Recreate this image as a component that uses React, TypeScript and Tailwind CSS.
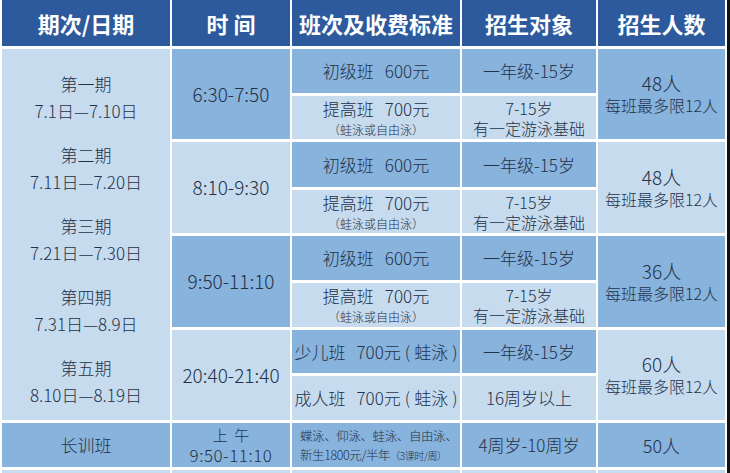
import React from "react";

const MID = "bg-[#88b3dc]";
const LIGHT = "bg-[#c7dbef]";

const periods = [
  ["第一期", "7.1日—7.10日"],
  ["第二期", "7.11日—7.20日"],
  ["第三期", "7.21日—7.30日"],
  ["第四期", "7.31日—8.9日"],
  ["第五期", "8.10日—8.19日"],
];

// row placement classes, written out so Tailwind sees them
const ROW = [
  "row-start-2",
  "row-start-3",
  "row-start-4",
  "row-start-5",
  "row-start-6",
  "row-start-7",
  "row-start-8",
  "row-start-9",
];

const times = ["6:30-7:50", "8:10-9:30", "9:50-11:10", "20:40-21:40"];
const totals = ["48人", "48人", "36人", "60人"];

function Cell({ className = "", children }: { className?: string; children?: React.ReactNode }) {
  return (
    <div className={`flex flex-col items-center justify-center text-center ${className}`}>{children}</div>
  );
}

function Price({ name, price }: { name: string; price: string }) {
  return (
    <div className="text-[17px] leading-[20px]">
      <span>{name}</span>
      <span className="ml-[11px]">{price}</span>
    </div>
  );
}

export default function App() {
  return (
    <div
      className="w-[730px] h-[473px] overflow-hidden bg-white flex text-[#233249] font-light"
      style={{ fontFamily: '"Noto Sans CJK SC", "Noto Sans", sans-serif' }}
    >
      <div className="pl-[2px] grid grid-cols-[168px_118px_168px_134px_127px] grid-rows-[46px_44px_43px_45px_43px_44px_44px_43px_44px_44px_40px] gap-x-[2px] gap-y-[3px]">
        {["期次/日期", "时 间", "班次及收费标准", "招生对象", "招生人数"].map((h) => (
          <Cell key={h} className="row-start-1 bg-[#2d5a9c] text-white font-bold text-[22px] whitespace-pre">
            {h}
          </Cell>
        ))}

        <div className={`${LIGHT} row-start-2 row-span-8 col-start-1 flex flex-col pt-[12px]`}>
          {periods.map(([p, d]) => (
            <div key={p} className="h-[71px] flex flex-col items-center justify-center text-[17px] leading-[27px]">
              <span>{p}</span>
              <span>{d}</span>
            </div>
          ))}
        </div>

        {times.map((t, i) => (
          <Cell key={t} className={`${i % 2 === 0 ? MID : LIGHT} ${ROW[i * 2]} col-start-2 row-span-2 text-[19px]`}>
            {t}
          </Cell>
        ))}

        {[0, 1, 2].map((i) => (
          <React.Fragment key={i}>
            <Cell className={`${MID} ${ROW[i * 2]} col-start-3`}>
              <Price name="初级班" price="600元" />
            </Cell>
            <Cell className={`${LIGHT} ${ROW[i * 2 + 1]} col-start-3`}>
              <Price name="提高班" price="700元" />
              <div className="text-[12px] leading-[15px] mt-[3px]">（蛙泳或自由泳）</div>
            </Cell>
          </React.Fragment>
        ))}
        <Cell className={`${MID} row-start-8 col-start-3`}>
          <div className="text-[17px] whitespace-nowrap">
            少儿班<span className="ml-[11px]">700元</span>
            <span className="mx-[4px]">(</span>蛙泳<span className="ml-[4px]">)</span>
          </div>
        </Cell>
        <Cell className={`${LIGHT} row-start-9 col-start-3`}>
          <div className="text-[17px] whitespace-nowrap">
            成人班<span className="ml-[11px]">700元</span>
            <span className="mx-[4px]">(</span>蛙泳<span className="ml-[4px]">)</span>
          </div>
        </Cell>

        {[0, 1, 2].map((i) => (
          <React.Fragment key={i}>
            <Cell className={`${MID} ${ROW[i * 2]} col-start-4 text-[17px]`}>一年级-15岁</Cell>
            <Cell className={`${LIGHT} ${ROW[i * 2 + 1]} col-start-4 text-[16px] leading-[20px]`}>
              <span>7-15岁</span>
              <span>有一定游泳基础</span>
            </Cell>
          </React.Fragment>
        ))}
        <Cell className={`${MID} row-start-8 col-start-4 text-[17px]`}>一年级-15岁</Cell>
        <Cell className={`${LIGHT} row-start-9 col-start-4 text-[17px]`}>16周岁以上</Cell>

        {totals.map((t, i) => (
          <Cell
            key={i}
            className={`${i % 2 === 0 ? MID : LIGHT} ${ROW[i * 2]} col-start-5 row-span-2 leading-[23px]`}
          >
            <span className="text-[19px]">{t}</span>
            <span className="text-[16px]">每班最多限12人</span>
          </Cell>
        ))}

        <Cell className={`${MID} row-start-10 col-start-1 text-[17px]`}>长训班</Cell>
        <Cell className={`${MID} row-start-10 col-start-2 leading-[20px]`}>
          <span className="text-[15px] whitespace-pre">上  午</span>
          <span className="text-[17px] tracking-[0.5px]">9:50-11:10</span>
        </Cell>
        <div className={`${MID} row-start-10 col-start-3 flex flex-col justify-center pl-[8px] text-[12.5px] leading-[19px] tracking-[-0.4px] whitespace-nowrap`}>
          <span>蝶泳、仰泳、蛙泳、自由泳、</span>
          <span>
            新生1800元/半年<span className="text-[10px]">（3课时/周）</span>
          </span>
        </div>
        <Cell className={`${MID} row-start-10 col-start-4 text-[17px]`}>4周岁-10周岁</Cell>
        <Cell className={`${MID} row-start-10 col-start-5 text-[18px]`}>50人</Cell>

        <div className={`${LIGHT} row-start-11 col-start-1`} />
        <div className={`${LIGHT} row-start-11 col-start-2`} />
        <div className={`${LIGHT} row-start-11 col-start-3`} />
        <div className={`${LIGHT} row-start-11 col-start-4`} />
        <div className={`${LIGHT} row-start-11 col-start-5`} />
      </div>
      <div className="ml-[2px] w-[3px] h-full bg-[#111]" />
    </div>
  );
}
